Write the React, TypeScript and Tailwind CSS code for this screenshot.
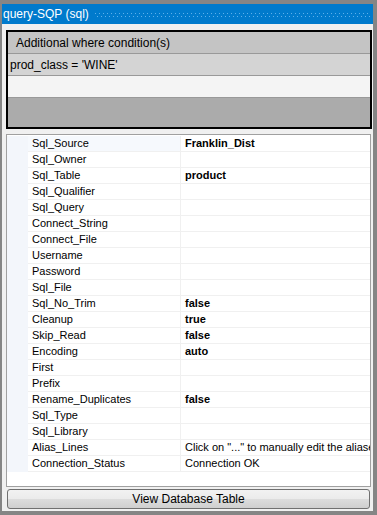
const rows: { name: string; value?: string; bold?: boolean }[] = [
  { name: "Sql_Source", value: "Franklin_Dist", bold: true },
  { name: "Sql_Owner" },
  { name: "Sql_Table", value: "product", bold: true },
  { name: "Sql_Qualifier" },
  { name: "Sql_Query" },
  { name: "Connect_String" },
  { name: "Connect_File" },
  { name: "Username" },
  { name: "Password" },
  { name: "Sql_File" },
  { name: "Sql_No_Trim", value: "false", bold: true },
  { name: "Cleanup", value: "true", bold: true },
  { name: "Skip_Read", value: "false", bold: true },
  { name: "Encoding", value: "auto", bold: true },
  { name: "First" },
  { name: "Prefix" },
  { name: "Rename_Duplicates", value: "false", bold: true },
  { name: "Sql_Type" },
  { name: "Sql_Library" },
  { name: "Alias_Lines", value: 'Click on "..." to manually edit the aliases' },
  { name: "Connection_Status", value: "Connection OK" },
];

export default function App() {
  return (
    <div
      className="w-[377px] h-[515px] bg-[#858585] pt-[4px] pl-[2px] pr-[4px] pb-[4px] flex flex-col text-black overflow-hidden"
      style={{ fontFamily: '"Liberation Sans", Arial, sans-serif' }}
    >
      {/* title bar */}
      <div className="h-[20px] bg-[#007acc] flex items-center pl-[1px] shrink-0">
        <span className="text-white text-[12px] leading-none whitespace-nowrap">query-SQP (sql)</span>
        <div className="flex-1 ml-[6px] mr-[2px] flex flex-col gap-[2px] mt-[1px]">
          <div className="h-px bg-[repeating-linear-gradient(90deg,#5fb0ea_0_1px,transparent_1px_4px)]" />
          <div className="h-px bg-[repeating-linear-gradient(90deg,transparent_0_2px,#5fb0ea_2px_3px,transparent_3px_4px)]" />
        </div>
      </div>

      {/* body */}
      <div className="flex-1 bg-[#f0f0f0] pl-[4px] pr-[1px] pt-[6px] pb-[2px] flex flex-col">
        {/* where condition box */}
        <div className="h-[99px] border-2 border-black bg-[#ababab] flex flex-col shrink-0">
          <div className="h-[22px] bg-[#c4c4c4] border-b border-[#999] flex items-center pl-[8px] text-[12px]">
            Additional where condition(s)
          </div>
          <div className="h-[22px] bg-[#d4d4d4] border-b border-[#999] flex items-center pl-[2px] text-[12px]">
            prod_class = 'WINE'
          </div>
          <div className="h-[22px] bg-[#f4f4f4] border-b border-[#999]" />
        </div>

        {/* property grid */}
        <div className="mt-[5px] h-[353px] mr-[1px] border border-[#a0a0a0] bg-white pt-px overflow-hidden shrink-0">
          {rows.map((r, i) => (
            <div key={r.name} className="h-[16px] flex text-[11px] leading-none">
              <div className="w-[21px] bg-[#f3f6fb] shrink-0" />
              <div
                className={
                  "w-[153px] shrink-0 border-b border-r border-[#f0f0f0] flex items-center pl-[4px] whitespace-nowrap " +
                  (i === 0 ? "bg-[#f6f9fd]" : "")
                }
              >
                {r.name}
              </div>
              <div
                className={
                  "flex-1 min-w-0 border-b border-[#f0f0f0] flex items-center pl-[4px] whitespace-nowrap overflow-hidden " +
                  (r.bold ? "font-bold" : "")
                }
              >
                {r.value}
              </div>
            </div>
          ))}
        </div>

        {/* button */}
        <div className="mt-[2px] ml-px mr-[2px] h-[20px] rounded-[3px] border border-[#707070] bg-[linear-gradient(180deg,#f2f2f2_0%,#ebebeb_50%,#dddddd_50%,#cfcfcf_100%)] flex items-center justify-center text-[12px] shrink-0">
          View Database Table
        </div>
      </div>
    </div>
  );
}
